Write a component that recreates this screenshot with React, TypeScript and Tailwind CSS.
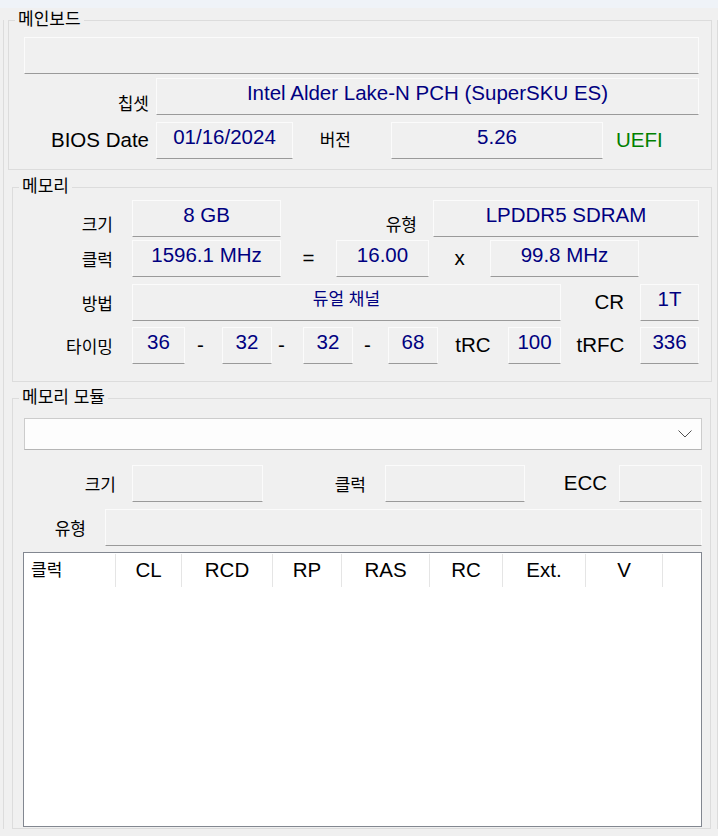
import type { ReactNode } from 'react';

type P = { className?: string; children?: ReactNode };

const fieldBase =
  'flex h-[37px] shrink-0 items-center justify-center whitespace-nowrap border border-[#fbfbfb] border-b-[#9a9a9a] bg-[#f0f0f0] pb-[6px] text-[#000080]';

const Field = ({ className = '', size = 'text-[20.5px]', children }: P & { size?: string }) => (
  <div className={`${fieldBase} ${size} ${className}`}>{children}</div>
);

const KLabel = ({ className = '', children }: P) => (
  <div className={`flex h-[37px] shrink-0 items-center justify-end whitespace-nowrap text-[17px] text-black ${className}`}>
    {children}
  </div>
);

const ELabel = ({ className = '', color = 'text-black', children }: P & { color?: string }) => (
  <div className={`flex h-[37px] shrink-0 items-center whitespace-nowrap text-[20.5px] ${color} ${className}`}>
    {children}
  </div>
);

const Group = ({ title, className = '', children }: P & { title: string }) => (
  <div className={`relative border border-[#dcdcdc] ${className}`}>
    <span className="absolute left-[6px] top-[-11px] bg-[#f0f0f0] px-[3px] text-[17px] leading-[20px] text-black">
      {title}
    </span>
    {children}
  </div>
);

const columns = [
  { label: '클럭', w: 'w-[92px] justify-start pl-[7px] text-[17px]' },
  { label: 'CL', w: 'w-[66px] justify-center text-[20.5px]' },
  { label: 'RCD', w: 'w-[91px] justify-center text-[20.5px]' },
  { label: 'RP', w: 'w-[69px] justify-center text-[20.5px]' },
  { label: 'RAS', w: 'w-[88px] justify-center text-[20.5px]' },
  { label: 'RC', w: 'w-[73px] justify-center text-[20.5px]' },
  { label: 'Ext.', w: 'w-[83px] justify-center text-[20.5px]' },
  { label: 'V', w: 'w-[77px] justify-center text-[20.5px]' },
];

export default function App() {
  return (
    <div className="h-[836px] w-[718px] overflow-hidden bg-[#f0f0f0] font-['Liberation_Sans','Noto_Sans_CJK_KR',sans-serif]">
      <div className="h-[8px] bg-[#eff3f8]" />

      <div className="ml-[3px] mt-[12px] h-[809px] w-[715px] border-x border-[#dcdcdc]">
        {/* 메인보드 */}
        <Group title="메인보드" className="ml-[4px] h-[150px] w-[704px]">
          <Field className="ml-[15px] mt-[16px] w-[675px]" />
          <div className="mt-[4px] flex">
            <KLabel className="w-[140px] pt-[16px]">칩셋</KLabel>
            <Field className="ml-[7px] w-[543px]">Intel Alder Lake-N PCH (SuperSKU ES)</Field>
          </div>
          <div className="mt-[7px] flex">
            <ELabel className="w-[140px] justify-end">BIOS Date</ELabel>
            <Field className="ml-[7px] w-[137px]">01/16/2024</Field>
            <KLabel className="w-[58px]">버전</KLabel>
            <Field className="ml-[40px] w-[212px]">5.26</Field>
            <ELabel className="ml-[13px]" color="text-[#008000]">UEFI</ELabel>
          </div>
        </Group>

        {/* 메모리 */}
        <Group title="메모리" className="ml-[8px] mt-[17px] h-[195px] w-[700px]">
          <div className="mt-[12px] flex">
            <KLabel className="w-[100px] pt-[15px]">크기</KLabel>
            <Field className="ml-[19px] w-[149px]">8 GB</Field>
            <KLabel className="w-[136px] pt-[15px]">유형</KLabel>
            <Field className="ml-[16px] w-[266px]">LPDDR5 SDRAM</Field>
          </div>
          <div className="mt-[3px] flex">
            <KLabel className="w-[100px] pt-[5px]">클럭</KLabel>
            <Field className="ml-[19px] w-[149px]">1596.1 MHz</Field>
            <ELabel className="w-[55px] justify-center">=</ELabel>
            <Field className="w-[93px]">16.00</Field>
            <ELabel className="w-[61px] justify-center">x</ELabel>
            <Field className="w-[149px]">99.8 MHz</Field>
          </div>
          <div className="mt-[7px] flex">
            <KLabel className="w-[100px] pt-[5px]">방법</KLabel>
            <Field className="ml-[19px] w-[429px]" size="text-[17px]">듀얼 채널</Field>
            <ELabel className="w-[63px] justify-end">CR</ELabel>
            <Field className="ml-[16px] w-[59px]">1T</Field>
          </div>
          <div className="mt-[6px] flex">
            <KLabel className="w-[100px] pt-[5px]">타이밍</KLabel>
            <Field className="ml-[19px] w-[53px]">36</Field>
            <ELabel className="w-[37px] pl-[12px]">-</ELabel>
            <Field className="w-[50px]">32</Field>
            <ELabel className="w-[31px] pl-[6px]">-</ELabel>
            <Field className="w-[50px]">32</Field>
            <ELabel className="w-[35px] pl-[11px]">-</ELabel>
            <Field className="w-[50px]">68</Field>
            <ELabel className="w-[70px] justify-center">tRC</ELabel>
            <Field className="w-[53px]">100</Field>
            <ELabel className="w-[79px] justify-center">tRFC</ELabel>
            <Field className="w-[59px]">336</Field>
          </div>
        </Group>

        {/* 메모리 모듈 */}
        <Group title="메모리 모듈" className="ml-[8px] mt-[16px] h-[431px] w-[699px]">
          <div className="ml-[11px] mt-[19px] flex h-[32px] w-[678px] items-center justify-end border border-[#cccccc] border-b-[#b5b5b5] bg-[#fdfdfd] pr-[9px]">
            <svg width="14" height="8" viewBox="0 0 14 8" fill="none">
              <path d="M0.5 0.5 L7 7 L13.5 0.5" stroke="#505050" strokeWidth="1" />
            </svg>
          </div>
          <div className="mt-[15px] flex">
            <KLabel className="w-[103px] pt-[5px]">크기</KLabel>
            <Field className="ml-[16px] w-[131px]" />
            <KLabel className="w-[103px] pt-[5px]">클럭</KLabel>
            <Field className="ml-[19px] w-[140px]" />
            <ELabel className="w-[82px] justify-end">ECC</ELabel>
            <Field className="ml-[12px] w-[83px]" />
          </div>
          <div className="mt-[7px] flex">
            <KLabel className="w-[73px] pt-[5px]">유형</KLabel>
            <Field className="ml-[19px] w-[597px]" />
          </div>
          <div className="ml-[10px] mt-[6px] h-[275px] w-[679px] border border-[#828790] bg-white">
            <div className="mt-[1px] flex h-[33px]">
              {columns.map((c) => (
                <div
                  key={c.label}
                  className={`flex h-full shrink-0 items-center border-r border-[#e5e5e5] text-black ${c.w}`}
                >
                  {c.label}
                </div>
              ))}
            </div>
          </div>
        </Group>
      </div>
    </div>
  );
}
